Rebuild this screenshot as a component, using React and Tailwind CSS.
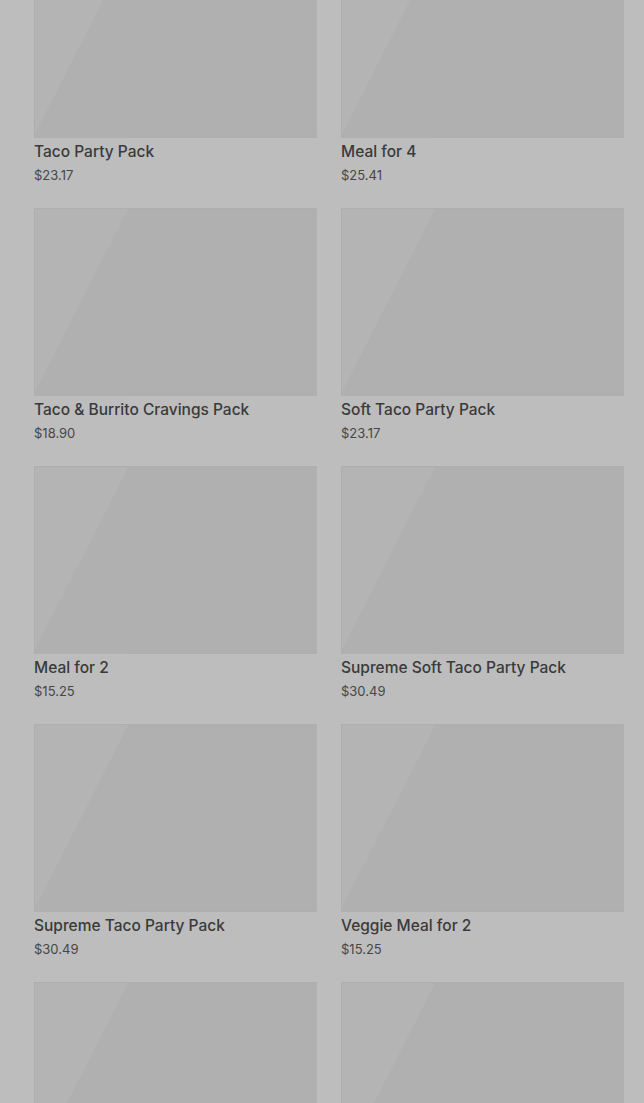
import React from "react";

const packs = [
  { name: "Taco Party Pack", price: "$23.17" },
  { name: "Meal for 4", price: "$25.41" },
  { name: "Taco & Burrito Cravings Pack", price: "$18.90" },
  { name: "Soft Taco Party Pack", price: "$23.17" },
  { name: "Meal for 2", price: "$15.25" },
  { name: "Supreme Soft Taco Party Pack", price: "$30.49" },
  { name: "Supreme Taco Party Pack", price: "$30.49" },
  { name: "Veggie Meal for 2", price: "$15.25" },
  { name: "", price: "" },
  { name: "", price: "" },
];

const ProductCard = ({ item }) => (
  <div className="flex flex-col">
    <div className="h-[188px] w-full border border-[#adadad]/40 bg-[linear-gradient(117deg,#b4b4b4_83px,#b0b0b0_83px)]" />
    {item.name && (
      <>
        <p className="mt-[2px] text-[15.5px] leading-[24px] font-medium text-[#3a3a3a]">
          {item.name}
        </p>
        <p className="text-[13px] leading-[22px] text-[#474747]">{item.price}</p>
      </>
    )}
  </div>
);

const App = () => {
  return (
    <div
      className="h-[1103px] overflow-hidden bg-[#bdbdbd]"
      style={{ fontFamily: "Inter, Roboto, 'Liberation Sans', sans-serif" }}
    >
      <div className="-mt-[50px] grid grid-cols-2 gap-x-[24px] gap-y-[22px] pl-[34px] pr-[20px]">
        {packs.map((item, i) => (
          <ProductCard key={i} item={item} />
        ))}
      </div>
    </div>
  );
};

export default App;
